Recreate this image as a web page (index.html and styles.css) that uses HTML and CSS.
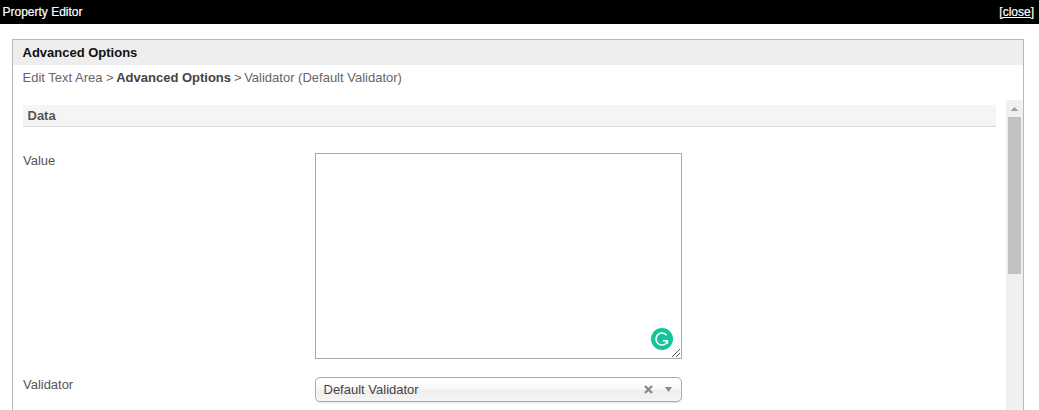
FILE: index.html
```html
<!DOCTYPE html>
<html lang="en">
<head>
<meta charset="utf-8">
<title>Property Editor</title>
<link rel="stylesheet" href="styles.css">
</head>
<body>
<header class="titlebar">
  <span class="titlebar-name">Property Editor</span>
  <a class="titlebar-close">[close]</a>
</header>
<main class="panel">
  <h1 class="panel-title"><span>Advanced Options</span></h1>
  <nav class="crumbs"><span class="crumb-a">Edit Text Area &gt;</span><b class="crumb-b">Advanced Options</b><span class="crumb-c">&gt;</span><span class="crumb-d">Validator (Default Validator)</span></nav>
  <div class="scroll">
    <div class="content">
      <h2 class="section"><span>Data</span></h2>
      <div class="row row-value">
        <label class="label label-value">Value</label>
        <div class="textbox">
          <svg class="assist" viewBox="0 0 22 22"><circle cx="11" cy="11" r="11" fill="#15c39a"/><path d="M15.6 7.2A6 6 0 1 0 15.3 15.2L16.3 13.8" fill="none" stroke="#fff" stroke-width="1.6"/><path d="M11.8 11.9H17.2V16.2L15.6 14.6L14.2 13.4H11.8Z" fill="#fff"/></svg>
          <svg class="grip" viewBox="0 0 10 10"><path d="M1 9L9 1M5 9L9 5" stroke="#555" stroke-width="1"/></svg>
        </div>
      </div>
      <div class="row row-validator">
        <label class="label label-validator">Validator</label>
        <div class="select">
          <span class="select-text">Default Validator</span>
          <svg class="clear" viewBox="0 0 9 9"><path d="M1 1L8 8M8 1L1 8" stroke="#888" stroke-width="2.3"/></svg>
          <svg class="arrow" viewBox="0 0 7 5"><path d="M0 0H7L3.5 5Z" fill="#888"/></svg>
        </div>
      </div>
    </div>
    <div class="scrollbar">
      <svg class="up" viewBox="0 0 7 4" shape-rendering="crispEdges"><path d="M3 0H4V1H5V2H6V3H7V4H0V3H1V2H2V1H3Z" fill="#a3a3a3"/></svg>
      <div class="thumb"></div>
    </div>
  </div>
</main>
</body>
</html>
```
FILE: styles.css
```css
* { box-sizing: border-box; }
body {
  margin: 0;
  width: 1039px;
  height: 410px;
  overflow: hidden;
  display: flex;
  flex-direction: column;
  background: #fff;
  color: #555;
  font: 13px/16px "Liberation Sans", Arial, sans-serif;
}
.titlebar {
  flex: none;
  display: flex;
  justify-content: space-between;
  height: 24px;
  padding: 4px 5px 0 2.5px;
  background: #000;
  color: #fff;
  font-size: 12px;
}
.titlebar-name { -webkit-text-stroke: 0.2px #fff; }
.titlebar-close { text-decoration: underline; -webkit-text-stroke: 0.2px #fff; }
.panel {
  flex: 1;
  min-height: 0;
  display: flex;
  flex-direction: column;
  margin: 15px 15px 0 12px;
  border: 1px solid #b9b9b9;
  border-bottom: 0;
}
.panel-title {
  flex: none;
  margin: 0;
  height: 25px;
  padding: 5px 0 0 9.5px;
  background: #eee;
  color: #111;
  font-size: 13px;
  font-weight: bold;
}
.crumbs {
  flex: none;
  display: flex;
  height: 35px;
  padding: 5px 0 0 9.5px;
  color: #666;
  white-space: nowrap;
}
.crumb-b { margin: 0 3px 0 2.5px; color: #444; }
.crumb-d { margin-left: 2.5px; }
.scroll { flex: 1; min-height: 0; display: flex; }
.content { flex: 1; padding: 5px 10px 0; overflow: hidden; }
.section {
  margin: 0 0 26px;
  height: 22px;
  padding: 3px 0 0 4.5px;
  background: #f5f5f5;
  border-bottom: 1px solid #dadada;
  color: #555;
  font-size: 13px;
  font-weight: bold;
}
.row { display: flex; align-items: flex-start; }
.row-validator { margin-top: 18px; }
.label { width: 292px; letter-spacing: -0.02px; }
.textbox {
  position: relative;
  width: 367px;
  height: 206px;
  border: 1px solid #a9a9a9;
}
.assist { position: absolute; right: 8px; bottom: 8px; width: 22px; height: 22px; }
.grip { position: absolute; right: 0; bottom: 0; width: 10px; height: 10px; }
.select {
  display: flex;
  align-items: center;
  width: 367px;
  height: 25px;
  padding: 0 9px 0 7.5px;
  border: 1px solid #aaa;
  border-radius: 5px;
  background: linear-gradient(#fff 20%, #f6f6f6 50%, #eee 52%, #f4f4f4 100%);
  box-shadow: inset 0 0 3px #fff, 0 1px 1px rgba(0, 0, 0, 0.1);
  color: #444;
}
.select-text { flex: 1; }
.clear { width: 9px; height: 9px; margin-right: 12px; }
.arrow { width: 7px; height: 5px; }
.scrollbar {
  flex: none;
  width: 17px;
  display: flex;
  flex-direction: column;
  align-items: center;
  background: #f0f0f0;
}
.up { width: 7px; height: 4px; margin: 7px 0 6px; }
.thumb { width: 13px; height: 157px; background: #c1c1c1; }
```
